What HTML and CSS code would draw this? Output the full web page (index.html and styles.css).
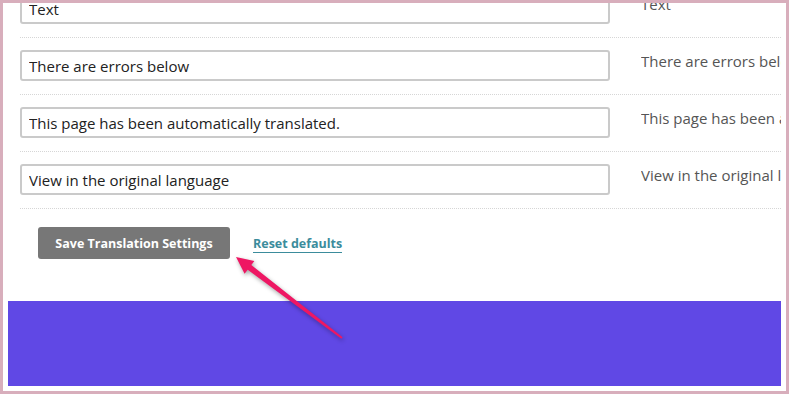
FILE: index.html
```html
<!DOCTYPE html>
<html lang="en">
<head>
  <meta charset="UTF-8" />
  <title>Translation settings</title>
  <link rel="stylesheet" href="styles.css">
</head>
<body>

  <div class="window">
    <!-- Translation strings -->
    <div class="settings">
      <div class="row">
        <input class="field" type="text" value="Text">
        <div class="original">Text</div>
      </div>
      <div class="row">
        <input class="field" type="text" value="There are errors below">
        <div class="original">There are errors below</div>
      </div>
      <div class="row">
        <input class="field" type="text" value="This page has been automatically translated.">
        <div class="original">This page has been automatically translated.</div>
      </div>
      <div class="row">
        <input class="field" type="text" value="View in the original language">
        <div class="original">View in the original language</div>
      </div>

      <div class="actions">
        <button class="save">Save Translation Settings</button>
        <a class="reset" href="#">Reset defaults</a>
      </div>
    </div>

    <div class="banner"></div>
  </div>

  <!-- Annotation arrow -->
  <svg class="arrow" width="789" height="394" viewBox="0 0 789 394">
    <polygon points="236,257 254.4,261 251.3,265 342.6,337.2 341.4,338.8 247.7,269.8 244.6,273.8" fill="#ee1763" />
  </svg>

</body>
</html>
```

FILE: styles.css
```css
body {
  margin: 0;
  padding: 3px;
  background: #d8aebc;
  font-family: 'Open Sans', 'Noto Sans', sans-serif;
}

.window {
  height: 388px;
  background: white;
  overflow: hidden;
  padding: 0 5px 5px 5px;
  box-sizing: border-box;
  display: flex;
  flex-direction: column;
}

.settings {
  margin-top: -22px;
  padding-left: 12px;
}

.row {
  display: grid;
  grid-template-columns: 590px 1fr;
  column-gap: 31px;
  padding: 12px 0 13px;
  border-bottom: 1px dotted #d6d6d6;
}

.field {
  height: 31px;
  box-sizing: border-box;
  border: 2px solid #cacaca;
  border-radius: 3px;
  padding: 0 7px;
  font-family: inherit;
  font-size: 15px;
  color: #222;
  background: white;
  margin: 0;
}

.original {
  font-size: 15px;
  color: #555;
  white-space: nowrap;
  overflow: hidden;
  line-height: 20px;
  padding-top: 1px;
}

.actions {
  display: flex;
  align-items: center;
  gap: 23px;
  margin-top: 18px;
  padding-left: 18px;
}

.save {
  width: 192px;
  height: 32px;
  border: none;
  border-radius: 3px;
  background: #777;
  color: white;
  font-family: inherit;
  font-weight: bold;
  font-size: 12.5px;
  cursor: pointer;
}

.reset {
  color: #3b8c9c;
  font-weight: bold;
  font-size: 12.5px;
  text-decoration: none;
  border-bottom: 1px solid #3b8c9c;
  line-height: 16px;
  margin-top: 2px;
}

.banner {
  margin-top: auto;
  height: 85px;
  background: #6048e5;
}

.arrow {
  position: absolute;
  top: 0;
  left: 0;
  pointer-events: none;
  filter: drop-shadow(1px 2px 2px rgba(0, 0, 0, 0.35));
}
```
